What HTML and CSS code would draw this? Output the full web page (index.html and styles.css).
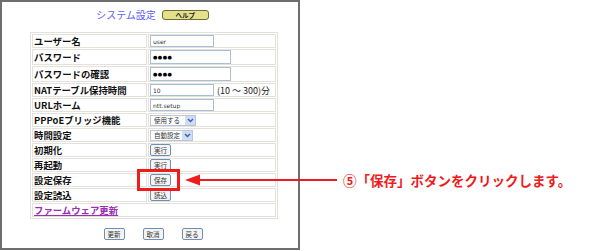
FILE: index.html
```html
<!DOCTYPE html>
<html lang="ja">

<head>
    <meta charset="UTF-8">
    <meta name="viewport" content="width=device-width, initial-scale=1.0">
    <title>システム設定</title>

    <link rel="stylesheet" href="styles.css">
</head>

<body>
    <div class="page">
        <div class="frame">
            <div class="title-bar">
                <span class="title">システム設定</span>
                <button class="help-button">ヘルプ</button>
            </div>
            <table class="settings">
                <tr>
                    <td class="label">ユーザー名</td>
                    <td class="value"><input class="field" type="text" value="user"></td>
                </tr>
                <tr class="tall">
                    <td class="label">パスワード</td>
                    <td class="value"><input class="field field-pass" type="text" value="●●●●"></td>
                </tr>
                <tr class="tall">
                    <td class="label">パスワードの確認</td>
                    <td class="value"><input class="field field-pass" type="text" value="●●●●"></td>
                </tr>
                <tr>
                    <td class="label">NATテーブル保持時間</td>
                    <td class="value">
                        <div class="with-unit">
                            <input class="field" type="text" value="10">
                            <span class="unit">(10 ～ 300)分</span>
                        </div>
                    </td>
                </tr>
                <tr>
                    <td class="label">URLホーム</td>
                    <td class="value"><input class="field" type="text" value="ntt.setup"></td>
                </tr>
                <tr>
                    <td class="label">PPPoEブリッジ機能</td>
                    <td class="value">
                        <div class="select select-wide">
                            <span class="select-text">使用する</span>
                            <span class="select-arrow">
                                <svg width="7" height="5" viewBox="0 0 7 5"><path d="M1 1 L3.5 3.5 L6 1" fill="none" stroke="#3a5cc0" stroke-width="1.4"/></svg>
                            </span>
                        </div>
                    </td>
                </tr>
                <tr>
                    <td class="label">時間設定</td>
                    <td class="value">
                        <div class="select">
                            <span class="select-text">自動設定</span>
                            <span class="select-arrow">
                                <svg width="7" height="5" viewBox="0 0 7 5"><path d="M1 1 L3.5 3.5 L6 1" fill="none" stroke="#3a5cc0" stroke-width="1.4"/></svg>
                            </span>
                        </div>
                    </td>
                </tr>
                <tr>
                    <td class="label">初期化</td>
                    <td class="value"><button class="small-button">実行</button></td>
                </tr>
                <tr>
                    <td class="label">再起動</td>
                    <td class="value"><button class="small-button">実行</button></td>
                </tr>
                <tr>
                    <td class="label">設定保存</td>
                    <td class="value"><button class="small-button">保存</button></td>
                </tr>
                <tr>
                    <td class="label">設定読込</td>
                    <td class="value"><button class="small-button">読込</button></td>
                </tr>
                <tr>
                    <td class="label" colspan="2"><a href="#" class="firmware-link">ファームウェア更新</a></td>
                </tr>
            </table>
            <div class="actions">
                <button class="small-button">更新</button>
                <button class="small-button">取消</button>
                <button class="small-button">戻る</button>
            </div>
        </div>

        <!-- callout over the screenshot -->
        <div class="highlight-box"></div>
        <svg class="callout-arrow" width="152" height="12" viewBox="0 0 152 12">
            <polygon points="0,6 15,0.5 15,11.5" fill="#ee1c1c"/>
            <rect x="14" y="5" width="138" height="2" fill="#ee1c1c"/>
        </svg>
        <p class="callout-text">⑤「保存」ボタンをクリックします。</p>
    </div>
</body>

</html>
```

FILE: styles.css
```css
* {
    box-sizing: border-box;
}

body {
    padding: 0;
    margin: 0;
    background: #fff;
    font-family: "Noto Sans CJK JP", "DejaVu Sans", sans-serif;
}

.page {
    position: relative;
    width: 600px;
    height: 251px;
}

.frame {
    width: 300px;
    height: 250px;
    border: 2px solid #6e6e6e;
    padding-top: 6px;
}

.title-bar {
    display: flex;
    justify-content: center;
    align-items: center;
    gap: 6px;
    height: 13px;
    padding-left: 5px;
}

.title {
    color: #5c5cf2;
    font-size: 10px;
    line-height: 13px;
}

.help-button {
    width: 47px;
    height: 10px;
    padding: 0;
    border: 1px solid #6d6a3a;
    border-radius: 3px;
    background: #e6e08a;
    color: #222;
    font-family: inherit;
    font-size: 6.5px;
    font-weight: 700;
    line-height: 8px;
}

.settings {
    margin: 11px 0 0 28px;
    width: 248px;
    border: 1px solid #e4e0da;
    border-spacing: 1px;
}

.settings td {
    border: 1px solid #e4e0da;
    padding: 0 1px;
    height: 14px;
    font-size: 9.4px;
    line-height: 11px;
    vertical-align: middle;
}

.settings tr.tall td {
    height: 16px;
}

.label {
    width: 115px;
    font-weight: 700;
    color: #111;
}

.field {
    display: block;
    width: 64px;
    height: 12px;
    padding: 0 2px;
    border: 1px solid #a9bfd6;
    font-family: "DejaVu Sans", sans-serif;
    font-size: 6px;
    color: #333;
    outline: none;
}

.field-pass {
    width: 81px;
    height: 14px;
    font-size: 5px;
    letter-spacing: 0.5px;
    color: #000;
}

.with-unit {
    display: flex;
    align-items: center;
    gap: 3px;
}

.unit {
    font-size: 9px;
    color: #222;
    white-space: nowrap;
}

.select {
    display: flex;
    align-items: center;
    width: 43px;
    height: 11px;
    border: 1px solid #b7c6da;
    background: #fff;
}

.select-wide {
    width: 46px;
}

.select-text {
    flex: 1;
    padding-left: 3px;
    font-size: 6.5px;
    color: #333;
    line-height: 9px;
}

.select-arrow {
    display: flex;
    align-items: center;
    justify-content: center;
    width: 10px;
    height: 9px;
    background: #cfdcf1;
}

.small-button {
    display: block;
    width: 21px;
    height: 12px;
    padding: 0;
    border: 1px solid #6f8fb0;
    border-radius: 2px;
    background: #f4f4f4;
    color: #333;
    font-family: inherit;
    font-size: 6.5px;
    line-height: 10px;
}

.firmware-link {
    color: #9a2fb4;
    text-decoration: underline;
}

.actions {
    display: flex;
    justify-content: center;
    gap: 18px;
    margin-top: 9px;
    padding-left: 6px;
}

.highlight-box {
    position: absolute;
    left: 137px;
    top: 169px;
    width: 43px;
    height: 22px;
    border: 3px solid #ee1c1c;
}

.callout-arrow {
    position: absolute;
    left: 185px;
    top: 174px;
}

.callout-text {
    position: absolute;
    left: 343px;
    top: 172px;
    margin: 0;
    font-size: 13.5px;
    font-weight: 700;
    line-height: 16px;
    color: #ee1c1c;
    white-space: nowrap;
}
```
